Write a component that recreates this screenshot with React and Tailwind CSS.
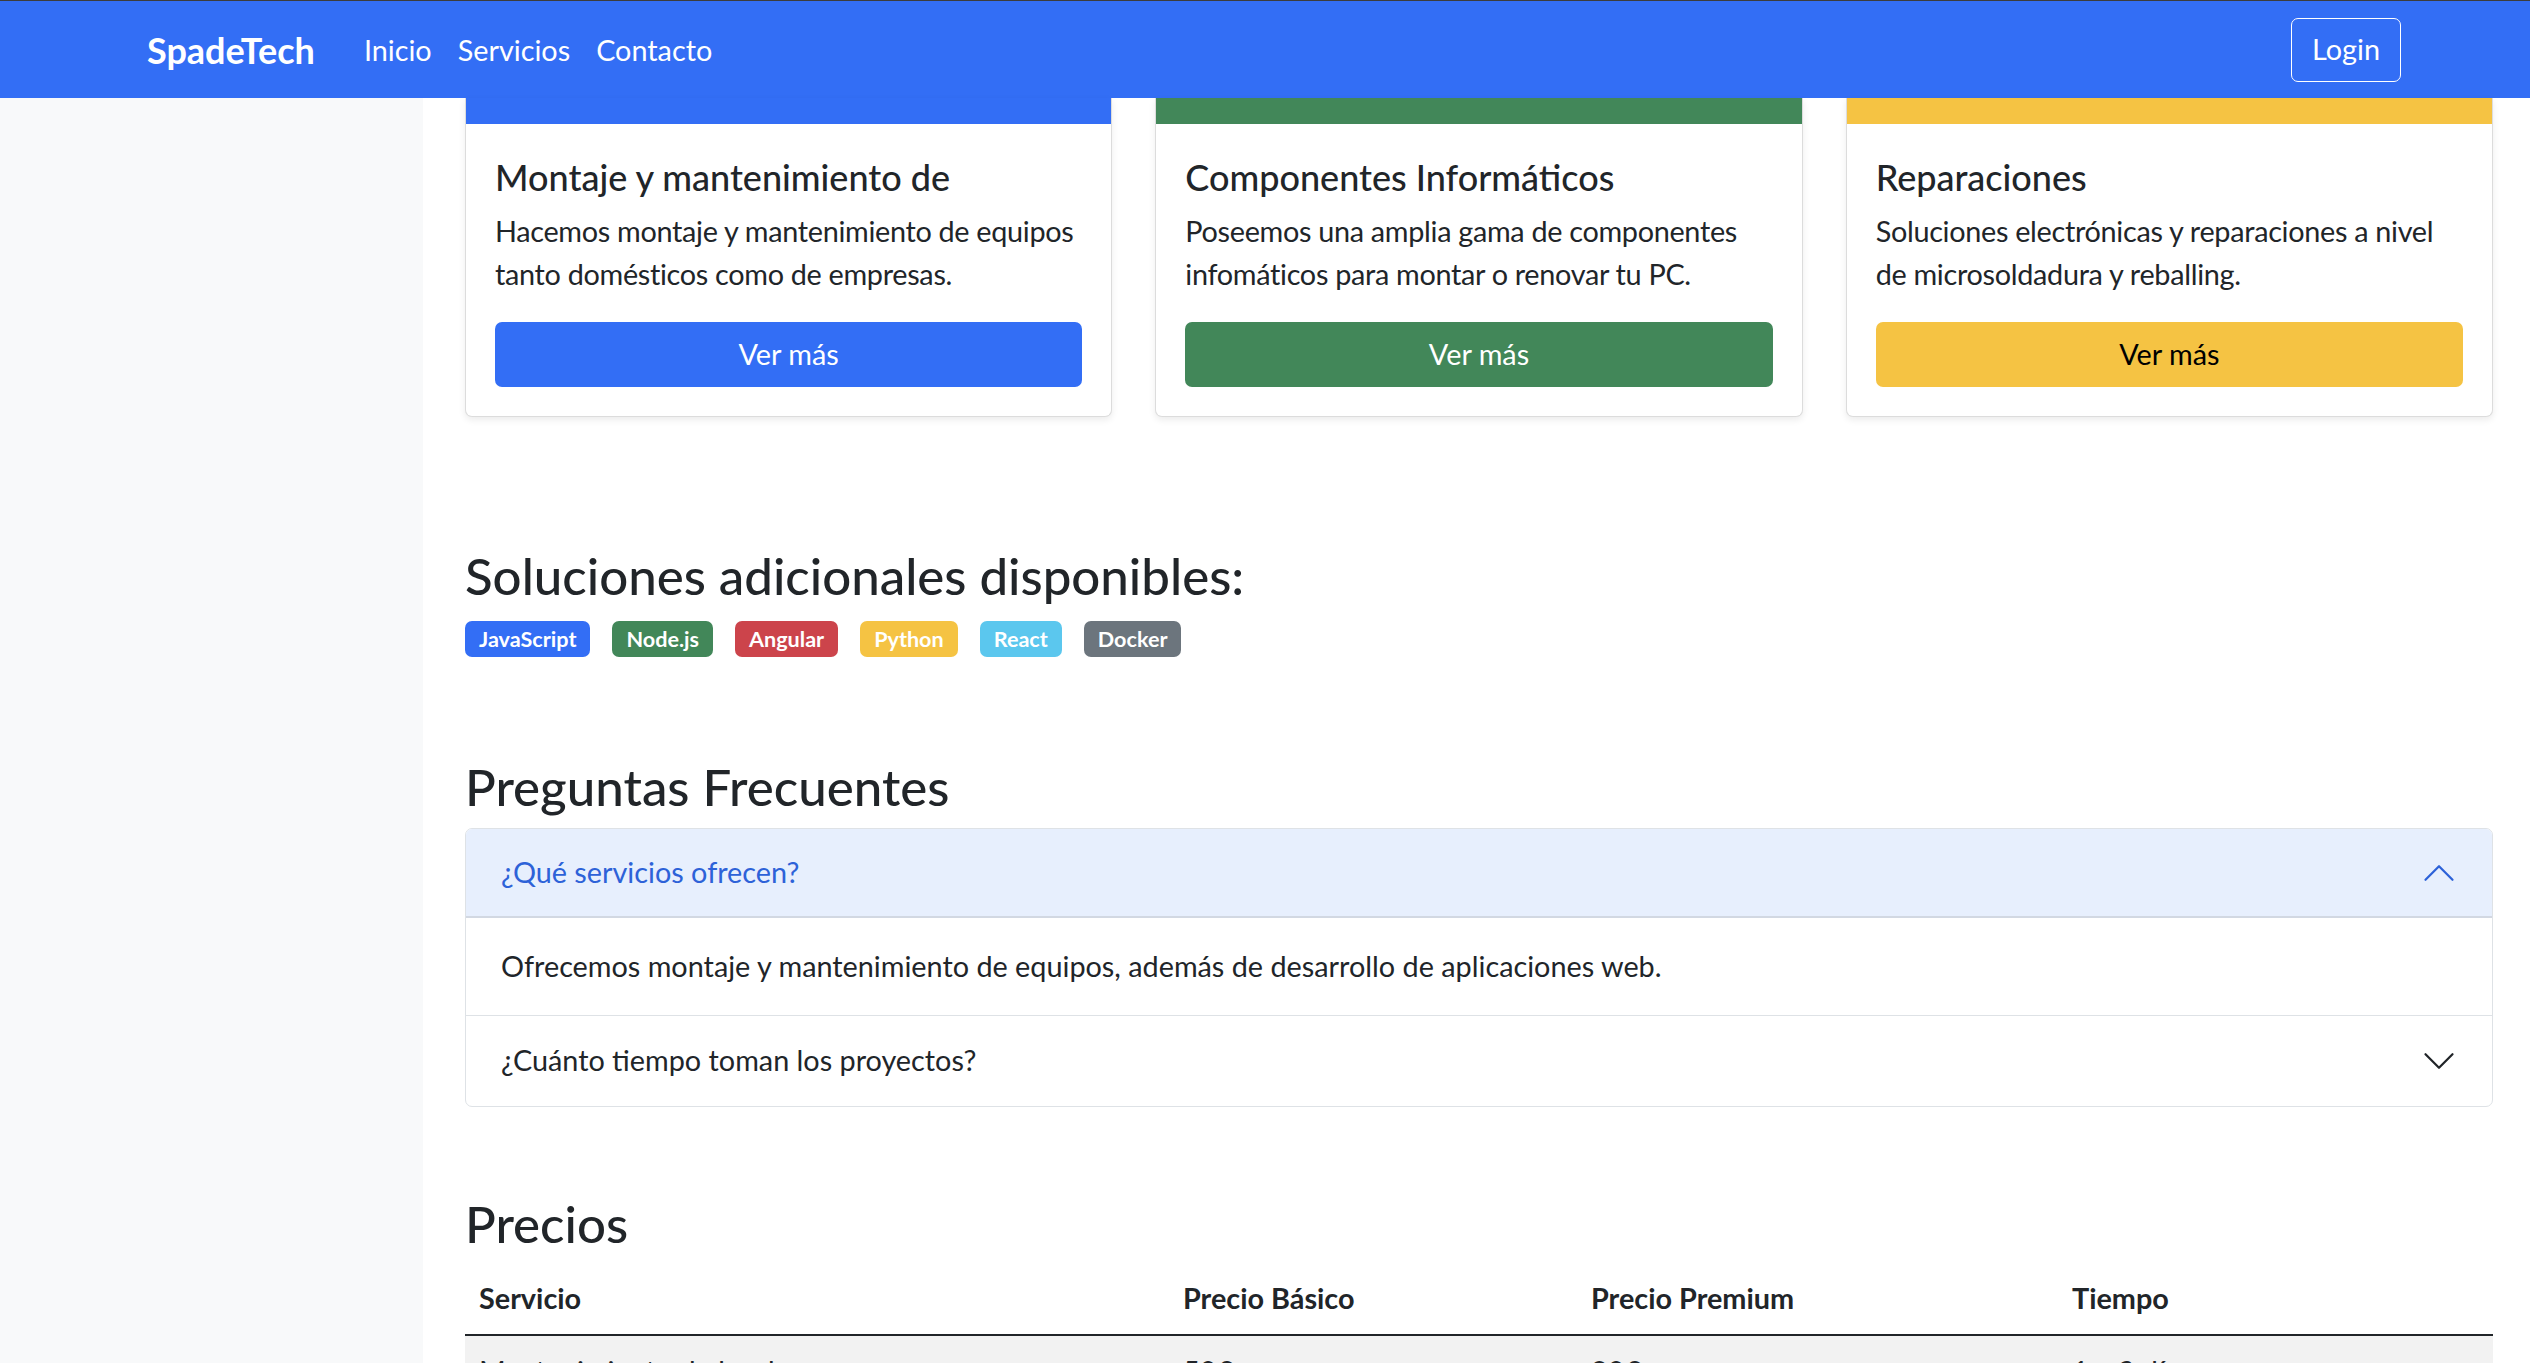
import React from "react";

const cards = [
  {
    title: "Montaje y mantenimiento de",
    text: "Hacemos montaje y mantenimiento de equipos tanto domésticos como de empresas.",
    band: "bg-[#336ef5]",
    btn: "bg-[#336ef5] text-white",
  },
  {
    title: "Componentes Informáticos",
    text: "Poseemos una amplia gama de componentes infomáticos para montar o renovar tu PC.",
    band: "bg-[#428759]",
    btn: "bg-[#428759] text-white",
  },
  {
    title: "Reparaciones",
    text: "Soluciones electrónicas y reparaciones a nivel de microsoldadura y reballing.",
    band: "bg-[#f5c343]",
    btn: "bg-[#f5c343] text-black",
  },
];

const badges = [
  { label: "JavaScript", cls: "bg-[#336ef5]" },
  { label: "Node.js", cls: "bg-[#428759]" },
  { label: "Angular", cls: "bg-[#cc444b]" },
  { label: "Python", cls: "bg-[#f5c343]" },
  { label: "React", cls: "bg-[#5bc7ee]" },
  { label: "Docker", cls: "bg-[#6c757d]" },
];

function Chevron({ up, color }) {
  return (
    <svg
      viewBox="0 0 16 16"
      className={`w-[36px] h-[36px] shrink-0 ${up ? "rotate-180" : ""}`}
      fill={color}
    >
      <path
        fillRule="evenodd"
        d="M1.646 4.646a.5.5 0 0 1 .708 0L8 10.293l5.646-5.647a.5.5 0 0 1 .708.708l-6 6a.5.5 0 0 1-.708 0l-6-6a.5.5 0 0 1 0-.708z"
      />
    </svg>
  );
}

export default function App() {
  return (
    <div
      className="w-full h-[1363px] overflow-hidden bg-white text-[#212529] flex flex-col"
      style={{ fontFamily: "Lato, 'Noto Sans', sans-serif" }}
    >
      {/* Navbar */}
      <nav className="h-[98px] shrink-0 border-t border-[#3c3c3c] bg-[#336ef5] flex items-center pl-[147px] pr-[129px]">
        <span className="text-[36px] font-bold text-white mr-[36px]">SpadeTech</span>
        <ul className="flex items-center pt-[2px]">
          {["Inicio", "Servicios", "Contacto"].map((link) => (
            <li key={link} className="px-[13px] text-[28.8px] text-white">
              {link}
            </li>
          ))}
        </ul>
        <button className="ml-auto h-[64px] px-[20px] border-[1.8px] border-white rounded-[7px] text-[28.8px] text-white">
          Login
        </button>
      </nav>

      <div className="flex flex-1 min-h-0">
        {/* Sidebar */}
        <aside className="w-[423px] shrink-0 bg-[#f8f9fa]" />

        {/* Main */}
        <main className="flex-1 pl-[42px] pr-[37px]">
          <div className="grid grid-cols-3 gap-[43px]">
            {cards.map((card) => (
              <div
                key={card.title}
                className="border border-[#dcdcdc] border-t-0 rounded-b-[7px] bg-white shadow-[0_3px_7px_rgba(0,0,0,0.08)] overflow-hidden"
              >
                <div className={`h-[26px] ${card.band}`} />
                <div className="p-[29px]">
                  <h5 className="text-[36px] font-medium leading-[43px] mt-[3px] mb-[11px]">{card.title}</h5>
                  <p className="text-[28.8px] leading-[43px] tracking-[-0.3px] mb-[26px]">{card.text}</p>
                  <button className={`w-full h-[65px] rounded-[7px] text-[28.8px] ${card.btn}`}>
                    Ver más
                  </button>
                </div>
              </div>
            ))}
          </div>

          {/* Soluciones */}
          <h2 className="mt-[124px] text-[51px] font-medium leading-[69px]">
            Soluciones adicionales disponibles:
          </h2>
          <div className="mt-[11px] flex gap-[22px]">
            {badges.map((b) => (
              <span
                key={b.label}
                className={`h-[36px] px-[14px] rounded-[7px] text-[21.6px] font-bold text-white flex items-center ${b.cls}`}
              >
                {b.label}
              </span>
            ))}
          </div>

          {/* FAQ */}
          <h2 className="mt-[95px] text-[51px] font-medium leading-[69px]">Preguntas Frecuentes</h2>
          <div className="mt-[7px] border border-[#dee2e6] rounded-[7px] overflow-hidden">
            <div className="h-[89px] px-[35px] bg-[#e7effd] border-b-2 border-[#d2d8e2] flex items-center justify-between">
              <span className="text-[28.8px] text-[#2d62d8]">¿Qué servicios ofrecen?</span>
              <Chevron up color="#2d62d8" />
            </div>
            <div className="h-[98px] px-[35px] border-b border-[#dee2e6] flex items-center text-[28.8px]">
              Ofrecemos montaje y mantenimiento de equipos, además de desarrollo de aplicaciones web.
            </div>
            <div className="h-[90px] px-[35px] flex items-center justify-between">
              <span className="text-[28.8px]">¿Cuánto tiempo toman los proyectos?</span>
              <Chevron color="#212529" />
            </div>
          </div>

          {/* Precios */}
          <h2 className="mt-[82px] text-[51px] font-medium leading-[69px]">Precios</h2>
          <div className="mt-[5px] text-[28.8px] leading-[43px]">
            <div className="grid grid-cols-[704px_408px_481px_1fr] font-bold border-b-2 border-[#212529]">
              {["Servicio", "Precio Básico", "Precio Premium", "Tiempo"].map((h) => (
                <div key={h} className="px-[14px] py-[14px]">
                  {h}
                </div>
              ))}
            </div>
            <div className="grid grid-cols-[704px_408px_481px_1fr] bg-[#f2f2f2]">
              {["Mantenimiento de hardware", "50€", "80€", "1 a 3 días"].map((c) => (
                <div key={c} className="px-[14px] py-[14px]">
                  {c}
                </div>
              ))}
            </div>
          </div>
        </main>
      </div>
    </div>
  );
}
